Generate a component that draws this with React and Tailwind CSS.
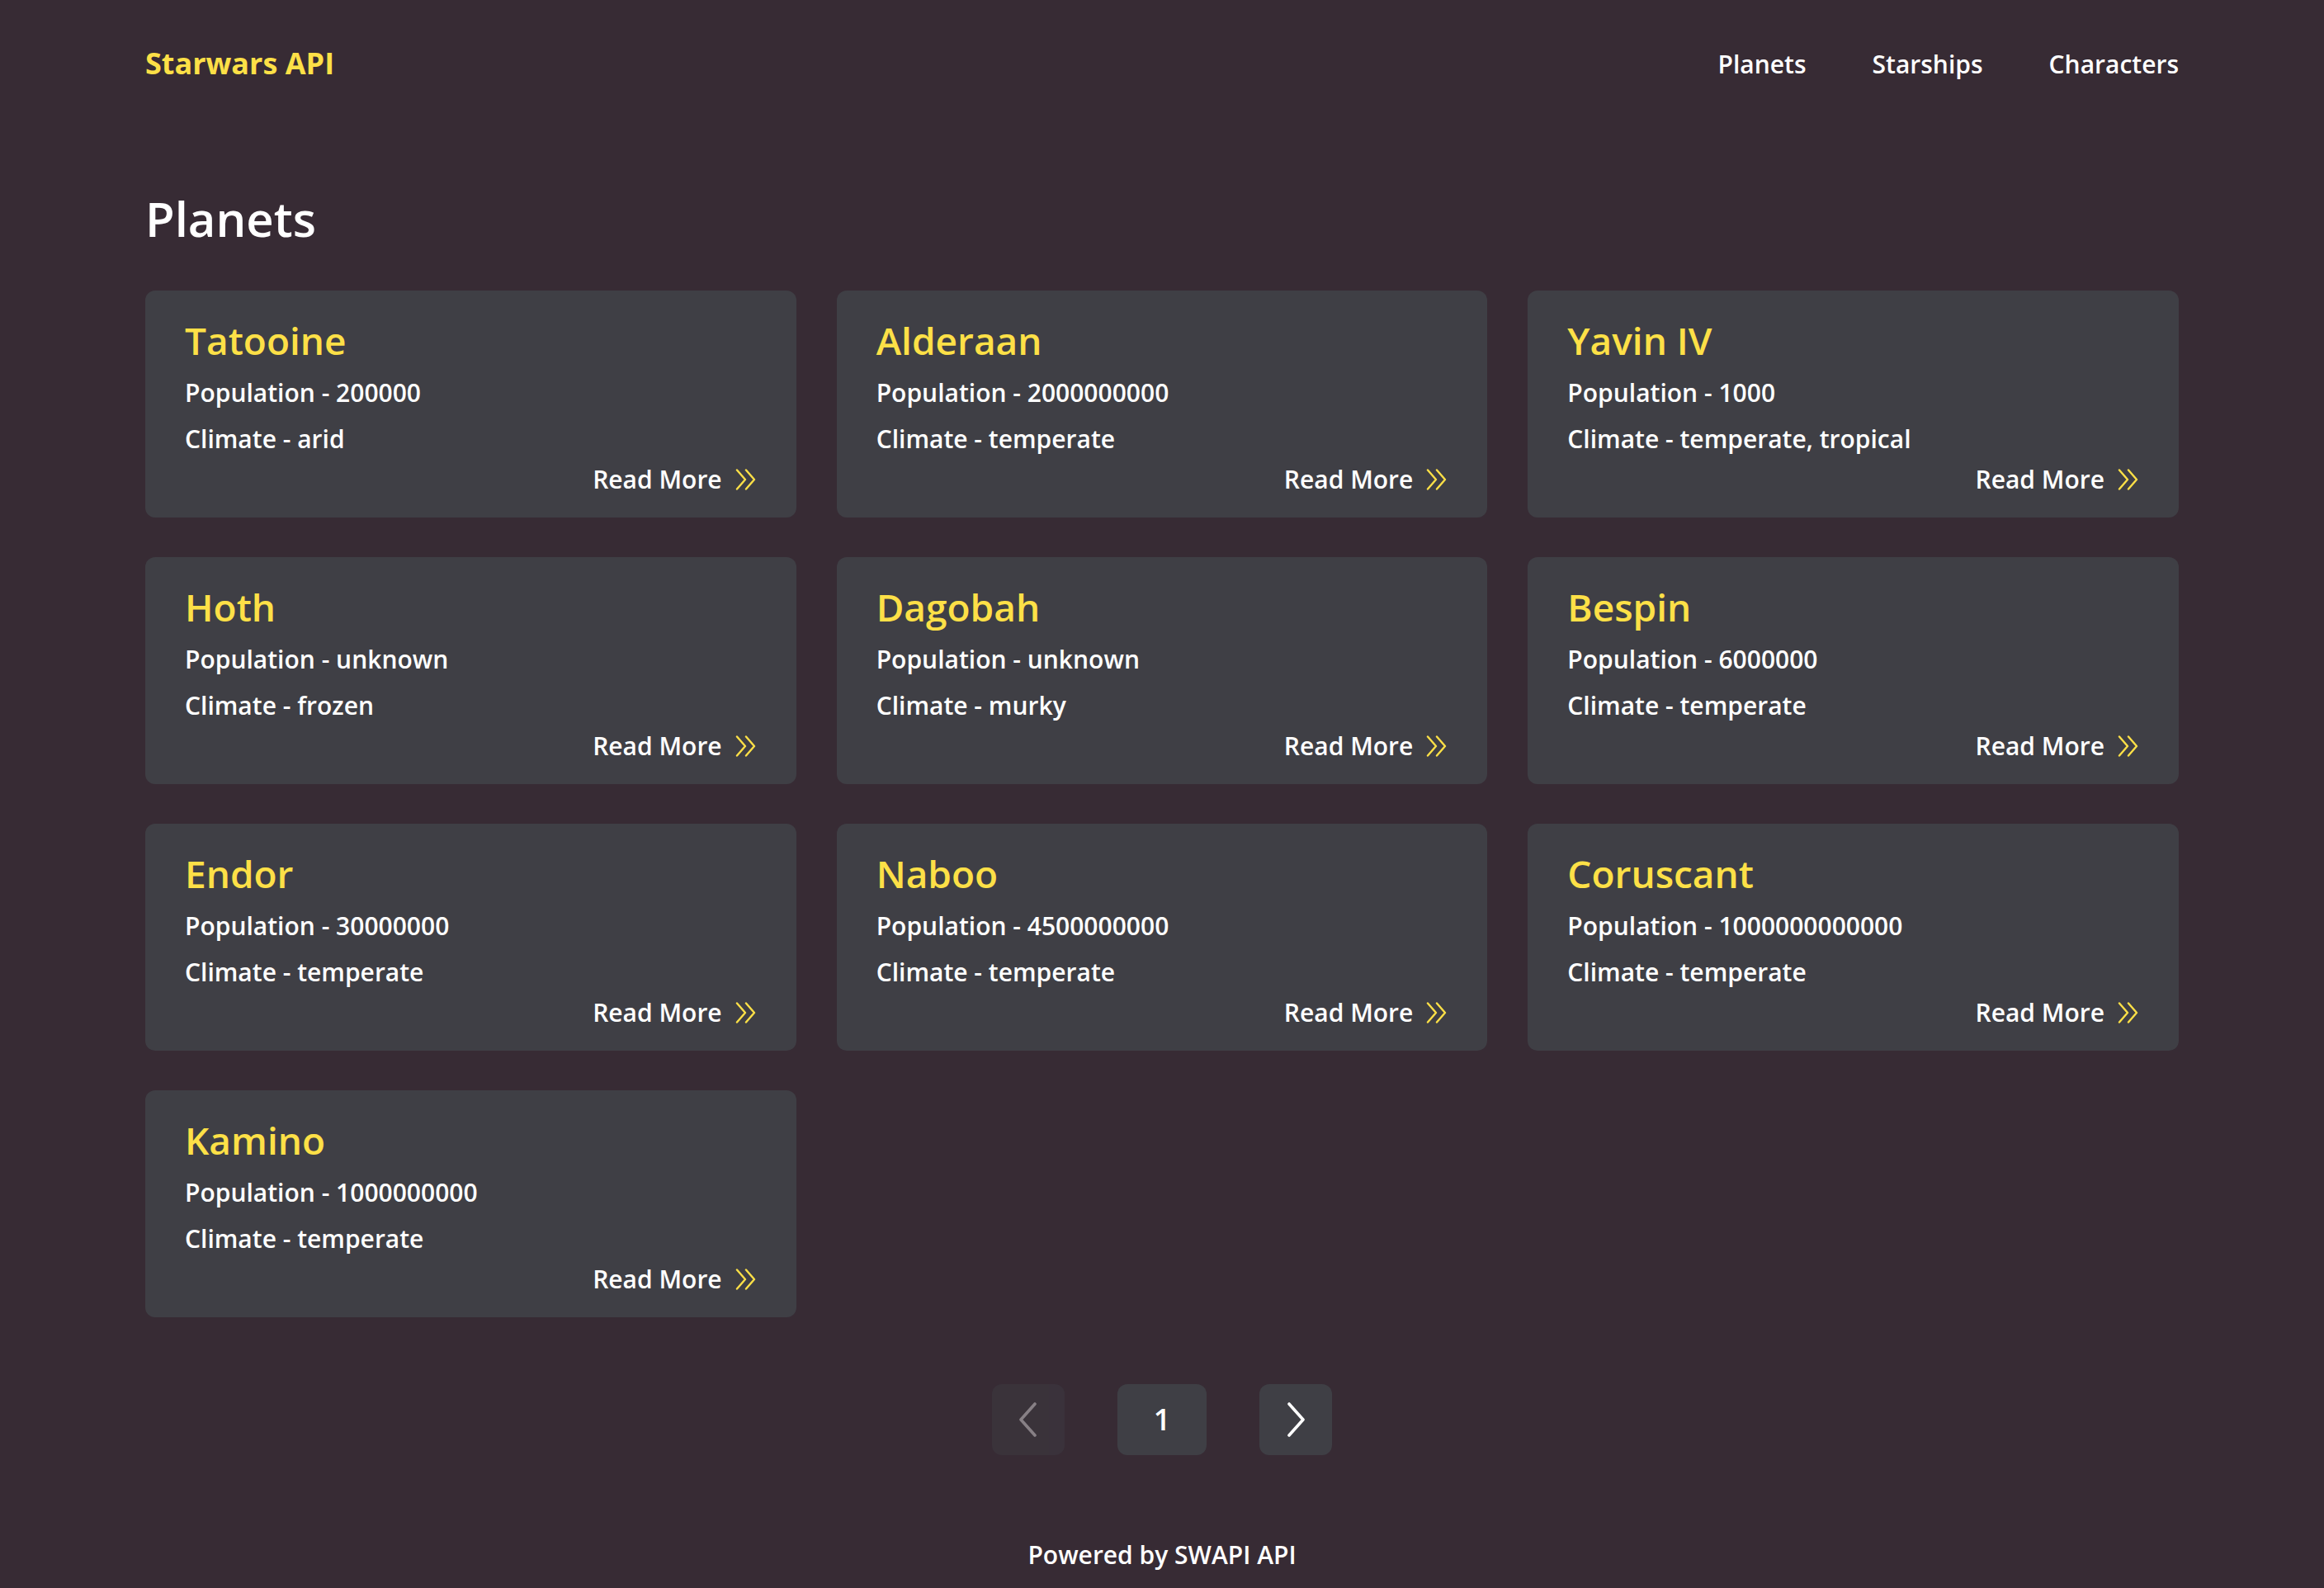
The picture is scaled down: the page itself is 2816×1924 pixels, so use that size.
const planets = [
  { name: "Tatooine", population: "200000", climate: "arid" },
  { name: "Alderaan", population: "2000000000", climate: "temperate" },
  { name: "Yavin IV", population: "1000", climate: "temperate, tropical" },
  { name: "Hoth", population: "unknown", climate: "frozen" },
  { name: "Dagobah", population: "unknown", climate: "murky" },
  { name: "Bespin", population: "6000000", climate: "temperate" },
  { name: "Endor", population: "30000000", climate: "temperate" },
  { name: "Naboo", population: "4500000000", climate: "temperate" },
  { name: "Coruscant", population: "1000000000000", climate: "temperate" },
  { name: "Kamino", population: "1000000000", climate: "temperate" },
];

function DoubleChevron() {
  return (
    <svg width="26" height="26" viewBox="0 0 26 26" fill="none" stroke="#fde047" strokeWidth="2.4" strokeLinecap="round" strokeLinejoin="round">
      <polyline points="2,1.5 12,13 2,24.5" />
      <polyline points="13,1.5 23,13 13,24.5" />
    </svg>
  );
}

function PageArrow({ dir }) {
  const points = dir === "left" ? "20,2 3,21 20,40" : "4,2 21,21 4,40";
  return (
    <svg width="24" height="42" viewBox="0 0 24 42" fill="none" stroke="currentColor" strokeWidth="3.6" strokeLinecap="round" strokeLinejoin="round">
      <polyline points={points} />
    </svg>
  );
}

function PlanetCard({ planet }) {
  return (
    <div className="flex flex-col rounded-[12px] bg-[#3f3f45] px-[48px] pt-[37px] pb-[28px]">
      <h3 className="text-[46px] leading-none text-[#fde047]">{planet.name}</h3>
      <p className="mt-[13px] text-[30px] leading-[56px]">Population - {planet.population}</p>
      <p className="text-[30px] leading-[56px]">Climate - {planet.climate}</p>
      <a href="#" className="mt-[3px] flex items-center justify-end gap-[16px] text-[30px] leading-[36px]">
        Read More
        <DoubleChevron />
      </a>
    </div>
  );
}

export default function App() {
  return (
    <div className="min-h-screen bg-[#372b34] px-[176px] font-['Open_Sans',sans-serif] font-semibold text-white">
      <header className="flex h-[154px] items-center justify-between">
        <span className="text-[36px] font-bold text-[#fde047]">Starwars API</span>
        <nav className="flex gap-[80px] text-[30px]">
          <a href="#">Planets</a>
          <a href="#">Starships</a>
          <a href="#">Characters</a>
        </nav>
      </header>

      <h1 className="mt-[82px] mb-[58px] text-[58px] leading-none">Planets</h1>

      <div className="grid grid-cols-3 gap-x-[49px] gap-y-[48px]">
        {planets.map((planet) => (
          <PlanetCard key={planet.name} planet={planet} />
        ))}
      </div>

      <div className="mt-[81px] flex justify-center gap-[64px]">
        <button className="flex h-[86px] w-[88px] items-center justify-center rounded-[12px] bg-[#3f3f45] opacity-40">
          <PageArrow dir="left" />
        </button>
        <button className="flex h-[86px] w-[108px] items-center justify-center rounded-[12px] bg-[#3f3f45] text-[36px]">
          1
        </button>
        <button className="flex h-[86px] w-[88px] items-center justify-center rounded-[12px] bg-[#3f3f45]">
          <PageArrow dir="right" />
        </button>
      </div>

      <footer className="mt-[106px] pb-[25px] text-center text-[30px] leading-none">Powered by SWAPI API</footer>
    </div>
  );
}
